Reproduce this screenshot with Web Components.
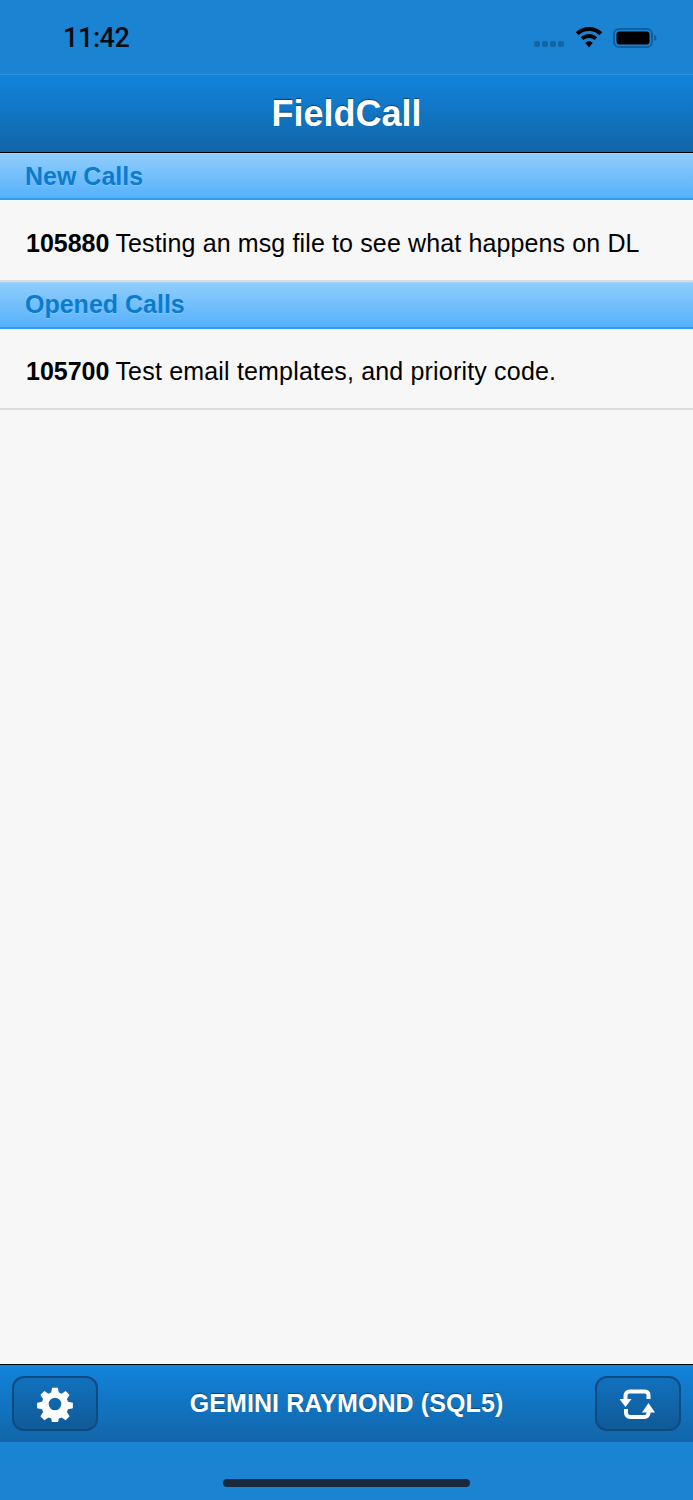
<!DOCTYPE html>
<html>
<head>
<meta charset="utf-8">
<title>FieldCall</title>
<style>
  html, body { margin: 0; padding: 0; height: 100%; }
  body { font-family: "Liberation Sans", Arial, sans-serif; background: #f7f7f7; }
</style>
</head>
<body>
<call-app>
  <status-bar slot="status" time="11:42"></status-bar>
  <title-bar slot="title">FieldCall</title-bar>

  <section-head>New Calls</section-head>
  <call-row number="105880">Testing an msg file to see what happens on DL</call-row>
  <section-head raised>Opened Calls</section-head>
  <call-row number="105700" slim>Test email templates, and priority code.</call-row>

  <foot-bar slot="foot">GEMINI RAYMOND (SQL5)</foot-bar>
</call-app>

<script>
// page frame: status + title on top, list fills the middle, footer at the bottom
class CallApp extends HTMLElement {
  constructor() {
    super();
    this.attachShadow({ mode: 'open' });
    this.shadowRoot.innerHTML = `
      <style>
        :host { display: flex; flex-direction: column; height: 1500px; background: #f7f7f7; }
        main { flex: 1; min-height: 0; }
      </style>
      <slot name="status"></slot>
      <slot name="title"></slot>
      <main><slot></slot></main>
      <slot name="foot"></slot>
    `;
  }
}

class StatusBar extends HTMLElement {
  constructor() {
    super();
    this.attachShadow({ mode: 'open' });
    this.shadowRoot.innerHTML = `
      <style>
        :host { display: flex; align-items: center; justify-content: space-between; box-sizing: border-box;
                height: 74px; padding: 3px 36px 0 63px; background: #1a83d2; }
        .time { font: 500 27px/1 Roboto, "Liberation Sans", sans-serif; color: #050a10; letter-spacing: -.4px; }
        .icons { display: flex; align-items: center; gap: 10px; margin-top: -2px; }
        .dots { display: flex; gap: 2px; margin-top: 12px; margin-right: 1px; }
        .dots i { width: 6px; height: 6px; border-radius: 2px; background: #1465a6; }
        svg { display: block; }
      </style>
      <span class="time"></span>
      <span class="icons">
        <span class="dots"><i></i><i></i><i></i><i></i></span>
        <svg width="28" height="22" viewBox="0 0 28 22">
          <path d="M14 0C8.900 0 4.200 2 .8 5.300l2.700 2.900C6.200 5.600 9.900 4 14 4s7.800 1.600 10.500 4.200l2.700-2.900C23.800 2 19.100 0 14 0z" fill="#000"/>
          <path d="M14 7C10.800 7 7.900 8.300 5.800 10.300l2.600 2.800C9.900 11.800 11.900 11 14 11s4.100.8 5.600 2.100l2.600-2.800C20.100 8.300 17.200 7 14 7z" fill="#000"/>
          <path d="M14 14.200c-1.500 0-2.800.6-3.800 1.500l3.800 4.700 3.800-4.700c-1-.9-2.300-1.500-3.800-1.500z" fill="#000"/>
        </svg>
        <svg width="44" height="22" viewBox="0 0 44 22">
          <rect x="1" y="2" width="38" height="18" rx="5" fill="none" stroke="#135f9e" stroke-width="2"/>
          <rect x="3.500" y="4.500" width="33" height="13" rx="3" fill="#000"/>
          <path d="M41 8c1.500.3 2.500 1.500 2.500 3s-1 2.700-2.500 3z" fill="#135f9e"/>
        </svg>
      </span>
    `;
    this.shadowRoot.querySelector('.time').textContent = this.getAttribute('time');
  }
}

class TitleBar extends HTMLElement {
  constructor() {
    super();
    this.attachShadow({ mode: 'open' });
    this.shadowRoot.innerHTML = `
      <style>
        :host { display: flex; align-items: center; justify-content: center; box-sizing: border-box;
                height: 79px; padding-top: 1px;
                border-top: 1px solid #2f93de; border-bottom: 1px solid #000;
                background: linear-gradient(#1184dc, #1265a8);
                font: bold 36px/1 "Liberation Sans", sans-serif; color: #fff;
                text-shadow: 0 -1px 1px rgba(0,0,0,.45); }
      </style>
      <slot></slot>
    `;
  }
}

class SectionHead extends HTMLElement {
  constructor() {
    super();
    this.attachShadow({ mode: 'open' });
    this.shadowRoot.innerHTML = `
      <style>
        :host { display: flex; align-items: center; box-sizing: border-box;
                height: 47px; padding: 0 0 0 25px;
                border-top: 1px solid #9bd3fd; border-bottom: 2px solid #2b9df5;
                background: linear-gradient(#8fcdfc, #56b1fb);
                font: bold 25px/1 "Liberation Sans", sans-serif; color: #0b7bce;
                text-shadow: 0 1px 0 rgba(255,255,255,.2); }
        :host([raised]) { padding-bottom: 2px; }
      </style>
      <slot></slot>
    `;
  }
}

class CallRow extends HTMLElement {
  constructor() {
    super();
    this.attachShadow({ mode: 'open' });
    this.shadowRoot.innerHTML = `
      <style>
        :host { display: flex; align-items: center; box-sizing: border-box;
                height: 82px; padding: 6px 25px 0 26px;
                border-bottom: 2px solid #dcdcdc; background: #f7f7f7;
                font: 25px/1 "Liberation Sans", sans-serif; color: #000; white-space: nowrap; }
        :host([slim]) { height: 81px; padding-top: 5px; }
        b { margin-right: 6px; }
        span { letter-spacing: .13px; }
        :host([slim]) span { letter-spacing: .18px; }
      </style>
      <b></b><span><slot></slot></span>
    `;
    this.shadowRoot.querySelector('b').textContent = this.getAttribute('number');
  }
}

class FootButton extends HTMLElement {
  constructor() {
    super();
    this.attachShadow({ mode: 'open' });
    this.shadowRoot.innerHTML = `
      <style>
        :host { display: flex; align-items: center; justify-content: center; box-sizing: border-box;
                width: 86px; height: 55px; border-radius: 12px;
                border: 2px solid #0f4a80;
                background: linear-gradient(#1171bd, #105a98); }
      </style>
      <slot></slot>
    `;
  }
}

class FootBar extends HTMLElement {
  constructor() {
    super();
    this.attachShadow({ mode: 'open' });
    this.shadowRoot.innerHTML = `
      <style>
        :host { display: block; background: #1a83d2; padding-bottom: 58px; }
        .bar { display: flex; align-items: center; justify-content: space-between; box-sizing: border-box;
               height: 78px; padding: 0 12px 0 12px; border-top: 1px solid #000;
               background: linear-gradient(#1184dc, #1265a8); }
        .label { font: bold 25px/1 "Liberation Sans", sans-serif; color: #fff; letter-spacing: .1px;
                 text-shadow: 0 -1px 1px rgba(0,0,0,.4); margin-top: -1px; }
        .home { position: absolute; left: 223px; top: 1479px; width: 247px; height: 8px;
                border-radius: 4px; background: #1a2a3c; }
        svg { display: block; }
      </style>
      <div class="bar">
        <foot-button>
          <svg width="36" height="36" viewBox="0 0 36 36">
            <path fill="#fff" fill-rule="evenodd" d="M15 .8h6l1 5.100 2.900 1.200 4.300-2.900 4.200 4.200-2.900 4.300 1.200 2.900 5.100 1v6l-5.100 1-1.200 2.900 2.900 4.300-4.200 4.200-4.300-2.900-2.900 1.200-1 5.100h-6l-1-5.100-2.900-1.200-4.300 2.900-4.200-4.200 2.900-4.300-1.200-2.900-5.100-1v-6l5.100-1 1.200-2.900-2.900-4.300 4.200-4.200 4.300 2.900 2.900-1.200zM18 11.400a6.600 6.600 0 1 0 0 13.200 6.600 6.600 0 0 0 0-13.200z" transform="translate(.9 .9) scale(.95)"/>
          </svg>
        </foot-button>
        <span class="label"><slot></slot></span>
        <foot-button>
          <svg width="36" height="34" viewBox="0 0 36 34" fill="none">
            <path d="M5.500 13V8.500a4 4 0 0 1 4-4H25a3.500 3.500 0 0 1 3.500 3.500v4" stroke="#fff" stroke-width="4"/>
            <path d="M28.500 24v2a4 4 0 0 1-4 4H10a4 4 0 0 1-4-4v-4" stroke="#fff" stroke-width="4"/>
            <path d="M-.5 12h12l-6 8z" fill="#fff"/>
            <path d="M22 25.500h13l-6.500-9.500z" fill="#fff"/>
          </svg>
        </foot-button>
      </div>
      <div class="home"></div>
    `;
  }
}

customElements.define('foot-button', FootButton);
customElements.define('foot-bar', FootBar);
customElements.define('call-row', CallRow);
customElements.define('section-head', SectionHead);
customElements.define('title-bar', TitleBar);
customElements.define('status-bar', StatusBar);
customElements.define('call-app', CallApp);
</script>
</body>
</html>
